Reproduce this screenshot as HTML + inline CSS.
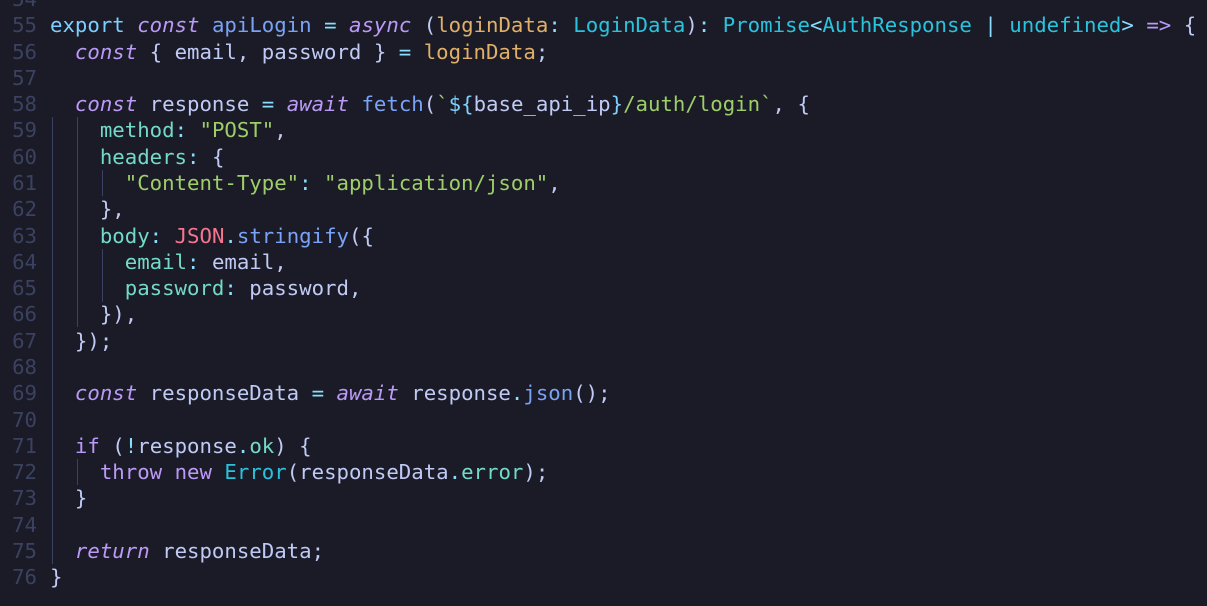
<!DOCTYPE html>
<html><head><style>
html,body{margin:0;padding:0;background:#1a1b26;width:1207px;height:606px;overflow:hidden}
.c{position:absolute;left:0;top:-14px;font-family:"DejaVu Sans Mono","Liberation Mono",monospace;font-size:20.7px;line-height:26.29px;color:#c0caf5}
.l{height:26.29px;position:relative;white-space:pre}
.n{display:inline-block;width:37px;text-align:right;color:#3b4261;margin-right:13px}
.k{color:#bb9af7;font-style:italic}
.e{color:#7dcfff}
.f{color:#7aa2f7}
.o{color:#89ddff}
.y{color:#e0af68}
.t{color:#2ac3de}
.s{color:#9ece6a}
.p{color:#73daca}
.r{color:#f7768e}
.g{position:absolute;width:1px;background:#3b4261}
</style></head><body>
<div class="g" style="left:52px;top:117px;height:447px"></div>
<div class="g" style="left:77px;top:117px;height:210px"></div>
<div class="g" style="left:102px;top:170px;height:26px"></div>
<div class="g" style="left:102px;top:249px;height:53px"></div>
<div class="g" style="left:77px;top:459px;height:26px"></div>
<div class="c"><div class="l"><span class="n">54</span></div><div class="l"><span class="n">55</span><span class="e">export</span> <span class="k">const</span> <span class="f">apiLogin</span> <span class="o">=</span> <span class="k">async</span> (<span class="y">loginData</span><span class="o">:</span> <span class="t">LoginData</span>)<span class="o">:</span> <span class="t">Promise</span><span class="o">&lt;</span><span class="t">AuthResponse</span> <span class="o">|</span> <span class="t">undefined</span><span class="o">&gt;</span> <span class="k" style="font-style:normal">=&gt;</span> {</div><div class="l"><span class="n">56</span>  <span class="k">const</span> { email, password } <span class="o">=</span> <span class="y">loginData</span>;</div><div class="l"><span class="n">57</span></div><div class="l"><span class="n">58</span>  <span class="k">const</span> response <span class="o">=</span> <span class="k">await</span> <span class="f">fetch</span>(<span class="s">`</span><span class="e">${</span>base_api_ip<span class="e">}</span><span class="s">/auth/login`</span>, {</div><div class="l"><span class="n">59</span>    <span class="p">method</span><span class="o">:</span> <span class="s">"POST"</span>,</div><div class="l"><span class="n">60</span>    <span class="p">headers</span><span class="o">:</span> {</div><div class="l"><span class="n">61</span>      <span class="s">"Content-Type"</span><span class="o">:</span> <span class="s">"application/json"</span>,</div><div class="l"><span class="n">62</span>    },</div><div class="l"><span class="n">63</span>    <span class="p">body</span><span class="o">:</span> <span class="r">JSON</span><span class="o">.</span><span class="f">stringify</span>({</div><div class="l"><span class="n">64</span>      <span class="p">email</span><span class="o">:</span> email,</div><div class="l"><span class="n">65</span>      <span class="p">password</span><span class="o">:</span> password,</div><div class="l"><span class="n">66</span>    }),</div><div class="l"><span class="n">67</span>  });</div><div class="l"><span class="n">68</span></div><div class="l"><span class="n">69</span>  <span class="k">const</span> responseData <span class="o">=</span> <span class="k">await</span> response<span class="o">.</span><span class="f">json</span>();</div><div class="l"><span class="n">70</span></div><div class="l"><span class="n">71</span>  <span class="k" style="font-style:normal">if</span> (<span class="o">!</span>response<span class="o">.</span><span class="p">ok</span>) {</div><div class="l"><span class="n">72</span>    <span class="k" style="font-style:normal">throw</span> <span class="k" style="font-style:normal">new</span> <span class="t">Error</span>(responseData<span class="o">.</span><span class="p">error</span>);</div><div class="l"><span class="n">73</span>  }</div><div class="l"><span class="n">74</span></div><div class="l"><span class="n">75</span>  <span class="k">return</span> responseData;</div><div class="l"><span class="n">76</span>}</div></div>
</body></html>
